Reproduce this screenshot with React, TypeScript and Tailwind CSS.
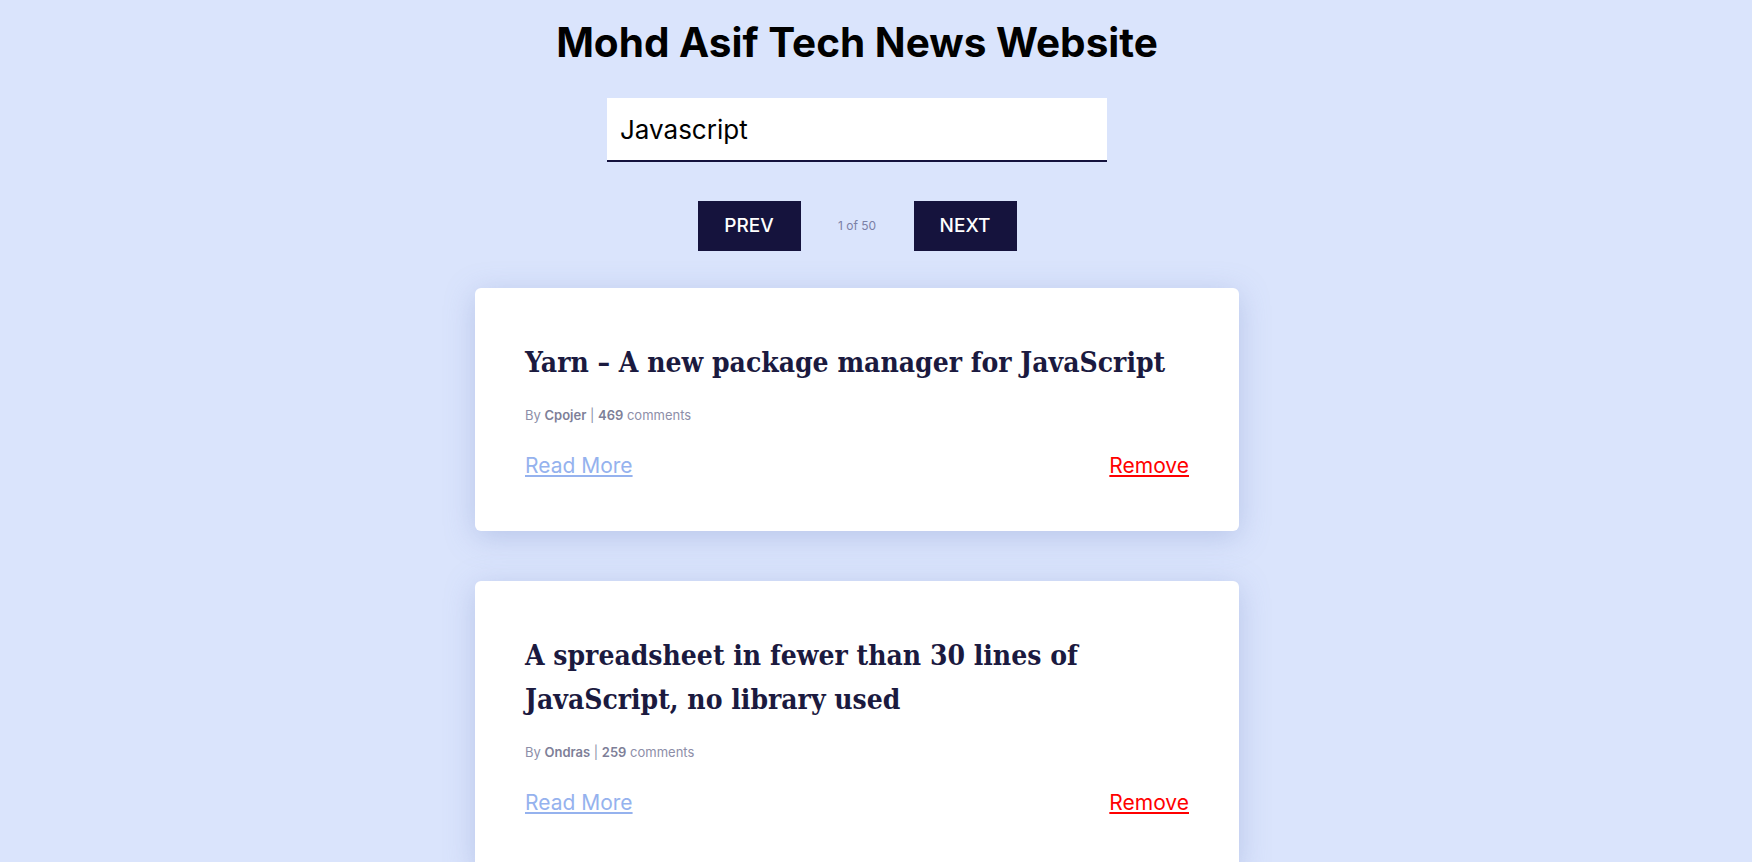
import { useState } from "react";

const stories = [
  {
    id: 12291338,
    title: "Yarn – A new package manager for JavaScript",
    author: "Cpojer",
    comments: 469,
  },
  {
    id: 11617398,
    title: "A spreadsheet in fewer than 30 lines of JavaScript, no library used",
    author: "Ondras",
    comments: 259,
  },
];

const SANS = "font-['Inter','Noto_Sans',sans-serif]";

function StoryCard({
  title,
  author,
  comments,
  onRemove,
}: {
  title: string;
  author: string;
  comments: number;
  onRemove: () => void;
}) {
  return (
    <div className="w-[764px] rounded-md bg-white px-[50px] pt-[53px] pb-[50px] shadow-[0_6px_30px_rgba(120,140,200,0.35)]">
      <h2 className="font-['DejaVu_Serif','Liberation_Serif',serif] text-[28px] leading-[44px] font-bold text-[#1b1a3f] [font-stretch:condensed]">
        {title}
      </h2>
      <p className={`${SANS} mt-[20px] text-[13px] leading-5 text-[#8d8ea8]`}>
        By <span className="font-semibold text-[#7e7f98]">{author}</span> |{" "}
        <span className="font-semibold text-[#7e7f98]">{comments}</span> comments
      </p>
      <div className={`${SANS} mt-[26px] flex items-center justify-between text-[21px] leading-[30px]`}>
        <a href="#" className="text-[#95b2ee] underline underline-offset-2">
          Read More
        </a>
        <a
          href="#"
          className="text-[#ff0000] underline underline-offset-2"
          onClick={(e) => {
            e.preventDefault();
            onRemove();
          }}
        >
          Remove
        </a>
      </div>
    </div>
  );
}

export default function App() {
  const [query, setQuery] = useState("Javascript");
  const [page, setPage] = useState(0);
  const [hits, setHits] = useState(stories);

  return (
    <div className={`${SANS} flex min-h-screen flex-col items-center bg-[#dae4fc] pr-[38px] pb-12`}>
      <h1 className="pt-[19px] text-[40.5px] leading-[48px] font-bold text-black">
        Mohd Asif Tech News Website
      </h1>

      <input
        type="text"
        value={query}
        onChange={(e) => setQuery(e.target.value)}
        className="mt-[31px] h-16 w-[500px] border-b-2 border-[#15133d] bg-white pl-[13px] text-[26px] text-black outline-none"
      />

      <div className="mt-[39px] flex items-center">
        <button
          type="button"
          className="h-[50px] w-[103px] bg-[#15133d] text-[19px] font-medium text-white"
          onClick={() => setPage((p) => Math.max(0, p - 1))}
        >
          PREV
        </button>
        <p className="w-[113px] text-center text-[12px] text-[#7b80a6]">
          {page + 1} of 50
        </p>
        <button
          type="button"
          className="h-[50px] w-[103px] bg-[#15133d] text-[19px] font-medium text-white"
          onClick={() => setPage((p) => Math.min(49, p + 1))}
        >
          NEXT
        </button>
      </div>

      <div className="mt-[37px] flex flex-col gap-[50px]">
        {hits.map((s) => (
          <StoryCard
            key={s.id}
            title={s.title}
            author={s.author}
            comments={s.comments}
            onRemove={() => setHits((h) => h.filter((x) => x.id !== s.id))}
          />
        ))}
      </div>
    </div>
  );
}
